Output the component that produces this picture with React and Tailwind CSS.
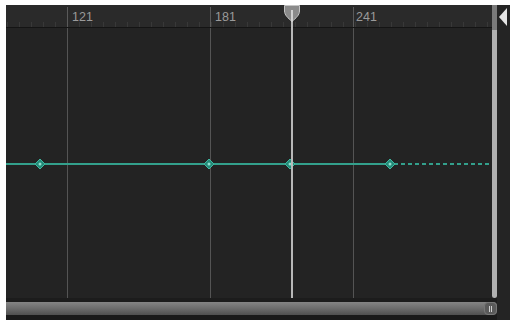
import React from "react";

const majors = [61, 204, 347];
const labels = [
  { x: 66, t: "121" },
  { x: 209, t: "181" },
  { x: 350, t: "241" },
];
const keys = [34, 203, 284, 384];

function Ticks() {
  const ticks = [];
  for (let x = 1; x < 486; x += 12) ticks.push(x);
  return (
    <svg className="absolute left-0 bottom-0" width="486" height="24">
      {ticks.map((x) => (
        <line key={x} x1={x + 0.5} x2={x + 0.5} y1="19" y2="24" stroke="#383838" strokeWidth="1" />
      ))}
      {majors.map((x) => (
        <line key={"m" + x} x1={x + 0.5} x2={x + 0.5} y1="4" y2="24" stroke="#5a5a5a" strokeWidth="1" />
      ))}
    </svg>
  );
}

function Content() {
  const y = 136;
  return (
    <svg className="block" width="486" height="270">
      {majors.map((x) => (
        <line key={x} x1={x + 0.5} x2={x + 0.5} y1="0" y2="270" stroke="#545454" strokeWidth="1" />
      ))}
      <line x1="0" x2="384" y1={y} y2={y} stroke="#33a08c" strokeWidth="2" />
      <line x1="388" x2="486" y1={y} y2={y} stroke="#33a08c" strokeWidth="2" strokeDasharray="4 3" />
      {keys.map((x) => (
        <g key={x}>
          <polygon points={`${x},${y - 5} ${x + 5},${y} ${x},${y + 5} ${x - 5},${y}`} fill="#248a78" stroke="#3fb7a0" strokeWidth="1" />
          <circle cx={x} cy={y} r="1.5" fill="#8fe0cf" />
        </g>
      ))}
    </svg>
  );
}

export default function App() {
  return (
    <div className="w-[510px] h-[320px] bg-white pt-[5px] pl-[6px] overflow-hidden" style={{ fontFamily: '"Liberation Sans", Arial, sans-serif' }}>
      <div className="flex h-[315px] bg-[#1c1c1c]">
        <div className="flex flex-col w-[491px]">
          <div className="flex h-[293px]">
            <div className="relative w-[486px] flex flex-col">
              <div className="relative h-[25px] bg-[#2a2a2a] border-b border-[#141414]">
                <Ticks />
                {labels.map((l) => (
                  <span key={l.t} className="absolute top-[6px] text-[12.5px] leading-none text-[#9a9a9a]" style={{ left: l.x }}>
                    {l.t}
                  </span>
                ))}
              </div>
              <div className="flex-1 bg-[#232323]">
                <Content />
              </div>
              <div className="absolute top-[4px] bottom-0 left-[285px] w-[2px] bg-[#b8b8b8]" />
              <svg className="absolute top-0 left-[277px]" width="18" height="17">
                <path d="M1.5 0.5 H16.5 V6 C16.5 10 13 13 9 16.5 C5 13 1.5 10 1.5 6 Z" fill="#8a8a8a" stroke="#c4c4c4" strokeWidth="1" />
                <line x1="9" x2="9" y1="5" y2="17" stroke="#d0d0d0" strokeWidth="2" />
              </svg>
            </div>
            <div className="w-[5px] flex flex-col">
              <div className="h-[25px] bg-[#7a7a7a]" />
              <div className="flex-1 bg-[#b0b0b0] rounded-b-[3px]" />
            </div>
          </div>
          <div className="mt-[4px] h-[13px] rounded-r-[4px] bg-gradient-to-b from-[#858585] via-[#6c6c6c] to-[#505050] flex justify-end">
            <div className="w-[13px] h-[13px] rounded-[4px] bg-[#5a5a5a] border border-[#777] flex items-center justify-center gap-[1px]">
              <div className="w-[1px] h-[6px] bg-[#cfcfcf]" />
              <div className="w-[1px] h-[6px] bg-[#cfcfcf]" />
            </div>
          </div>
          <div className="flex-1 bg-[#1a1a1a]" />
        </div>
        <div className="flex-1 bg-[#242424] relative">
          <svg className="absolute top-[3px] left-[1px]" width="10" height="18">
            <path d="M9 0 L9 18 L1 9 Z" fill="#e6e6e6" />
          </svg>
        </div>
      </div>
    </div>
  );
}
